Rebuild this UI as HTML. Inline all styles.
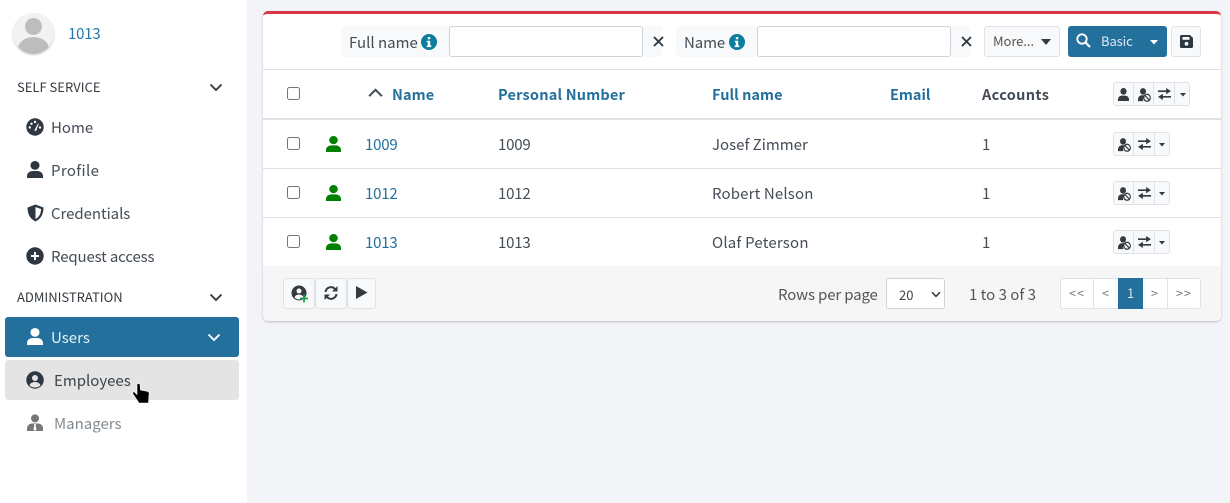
<!DOCTYPE html>
<html><head><meta charset="utf-8">
<style>
*{box-sizing:border-box}
html,body{margin:0;padding:0}
body{width:1230px;height:503px;overflow:hidden;background:#f3f4f8;position:relative;font-family:"Noto Sans CJK SC","Liberation Sans",sans-serif;font-size:15px;color:#444c56;letter-spacing:.1px}
.a{position:absolute;white-space:nowrap;line-height:20px}
.b{position:absolute}
.l{color:#23709d}
.h{font-weight:700;letter-spacing:.2px;font-size:14.5px}
.nav{font-size:15px;letter-spacing:0;color:#444c56}
.cat{font-size:13px;letter-spacing:0;color:#343a40}
.btn{position:absolute;background:#f8f9fa;border:1px solid #dee2e6;border-radius:3px}
.cb{position:absolute;width:13px;height:13px;border:1px solid #767676;border-radius:2.5px;background:#fff;left:287px}
svg{position:absolute;display:block}
</style></head><body>
<svg width="0" height="0" style="position:absolute"><defs>
<symbol id="u" viewBox="1 0.4 14 15.6" preserveAspectRatio="none"><circle cx="8" cy="4.400" r="4"/><path d="M1 16v-1.600C1 11.300 3.400 9.600 6 9.600h4c2.600 0 5 1.700 5 4.800V16z"/></symbol>
<symbol id="ub" viewBox="0 0 15.500 15.500" preserveAspectRatio="none"><circle cx="6" cy="3.800" r="3.600"/><path d="M0 14.500v-1.500C0 10 2 8 4.500 8h3l1 .5A5 5 0 0 0 6.300 14.500z"/><circle cx="10.800" cy="10.800" r="3.900" fill="#f8f9fa" stroke-width="1.400" stroke="currentColor"/><path d="M8.100 8.100l5.400 5.400" stroke="currentColor" stroke-width="1.400"/></symbol>
<symbol id="sw" viewBox="0 0 16 16" preserveAspectRatio="none"><path d="M0 4.200h11M3 11.800h13" stroke="currentColor" stroke-width="2.200" fill="none"/><path d="M10 0l6 4.200-6 4.200zM6 7.600L0 11.800l6 4.200z"/></symbol>
<symbol id="ch" viewBox="0 0 14 9" preserveAspectRatio="none"><path d="M1.500 1.500L7 7l5.500-5.500" fill="none" stroke="currentColor" stroke-width="1.900"/></symbol>
<symbol id="info" viewBox="0 0 16 16"><circle cx="8" cy="8" r="8" fill="#0c7d9d"/><rect x="6.800" y="3" width="2.400" height="2.300" fill="#fff"/><path d="M5.800 6.700h3.400v4.700h1.100v1.700H5.700v-1.700h1.100V8.400h-1z" fill="#fff"/></symbol>
</defs></svg>

<!-- sidebar -->
<div class="b" style="left:0;top:0;width:247px;height:503px;background:#fff"></div>
<div class="b" style="left:13px;top:13px;width:41px;height:41px;border-radius:50%;background:#f1f2f2;box-shadow:0 1px 2px #ccc;overflow:hidden">
<div class="b" style="left:12px;top:5px;width:17px;height:17px;border-radius:50%;background:#bdbdbd"></div>
<div class="b" style="left:5px;top:24px;width:31px;height:24px;border-radius:50%;background:#bdbdbd"></div></div>
<div class="a" style="left:68px;top:24px;font-size:15px;letter-spacing:-.2px;color:#2577ab">1013</div>

<div class="a cat" style="left:17px;top:77px">SELF SERVICE</div>
<svg style="left:209px;top:83px;color:#343a40" width="14" height="9"><use href="#ch"/></svg>

<svg style="left:26px;top:118px" width="18" height="18" viewBox="0 0 18 18"><circle cx="9" cy="9" r="8.700" fill="#2f3742"/><circle cx="5.500" cy="5.800" r="1.200" fill="#fff"/><circle cx="9" cy="4" r="1.200" fill="#fff"/><circle cx="3.800" cy="9.500" r="1.200" fill="#fff"/><circle cx="14" cy="9.500" r="1.200" fill="#fff"/><path d="M8.300 12.500L12 5.500l.8.4-2.800 7.200z" fill="#fff"/></svg>
<div class="a nav" style="left:51px;top:118px">Home</div>
<svg style="left:27px;top:161px;fill:#2f3742" width="16" height="17"><use href="#u"/></svg>
<div class="a nav" style="left:51px;top:161px;letter-spacing:.35px">Profile</div>
<svg style="left:27px;top:204px" width="17" height="18" viewBox="0 0 17 18"><path d="M8.500 0.500L16.500 3.500c0 6-2 11-8 14-6-3-8-8-8-14z" fill="#2f3742"/><path d="M8.500 3L14 5c0 4-1.500 8-5.500 10z" fill="#fff"/></svg>
<div class="a nav" style="left:51px;top:204px;letter-spacing:-.05px">Credentials</div>
<svg style="left:26px;top:247px" width="18" height="18" viewBox="0 0 18 18"><circle cx="9" cy="9" r="8.700" fill="#2f3742"/><path d="M9 5v8M5 9h8" stroke="#fff" stroke-width="2"/></svg>
<div class="a nav" style="left:51px;top:247px;letter-spacing:-.15px">Request access</div>

<div class="a cat" style="left:17px;top:287px">ADMINISTRATION</div>
<svg style="left:209px;top:293px;color:#343a40" width="14" height="9"><use href="#ch"/></svg>

<div class="b" style="left:5px;top:317px;width:234px;height:40px;background:#23709d;border-radius:3px"></div>
<svg style="left:27px;top:328px;fill:#fff" width="16" height="17"><use href="#u"/></svg>
<div class="a nav" style="left:51px;top:328px;color:#e6f0f6">Users</div>
<svg style="left:207px;top:333px;color:#fff" width="14" height="9"><use href="#ch"/></svg>

<div class="b" style="left:5px;top:360px;width:234px;height:40px;background:#e4e4e4;border-radius:3px"></div>
<svg style="left:26px;top:371px" width="18" height="18" viewBox="0 0 18 18"><circle cx="9" cy="9" r="8.700" fill="#2f3742"/><circle cx="9" cy="7" r="3" fill="#e4e4e4"/><path d="M3.500 14.500c.8-2.500 2.800-3.500 5.500-3.500s4.700 1 5.500 3.500A8 8 0 0 1 9 16.500a8 8 0 0 1-5.500-2z" fill="#e4e4e4"/></svg>
<div class="a nav" style="left:54px;top:371px;color:#3c434c">Employees</div>
<svg style="left:132px;top:383px" width="18" height="21" viewBox="0 0 18 21"><path d="M5 1.500C5 .3 8 .3 8 1.500L8.500 7l7.500 1.500c1 .5 1.500 1.500 1 3.500l-.5 8H7L1 11c-1-1.500.5-2.500 1.500-2L5 11.500z" fill="#000" stroke="#fff" stroke-width=".6"/></svg>

<svg style="left:27px;top:414px" width="16" height="18" viewBox="0 0 16 18"><circle cx="8" cy="4.400" r="4" fill="#777"/><path d="M0 17v-2.500C0 11.500 2.500 9.500 5 9.500h6c2.500 0 5 2 5 5V17z" fill="#777"/><path d="M7 10h2l-.3 1.500.8 4-1.500 1.500-1.500-1.500.8-4z" fill="#fff"/></svg>
<div class="a nav" style="left:54px;top:414px;color:#848b92">Managers</div>

<!-- card -->
<div class="b" style="left:263px;top:11px;width:958px;height:310px;background:#fff;border-top:3px solid #dc3545;border-radius:5px;box-shadow:0 1px 2px rgba(0,0,0,.22);overflow:hidden">
<div class="b" style="left:0;top:252px;width:958px;height:55px;background:#f6f6f7"></div>
</div>

<!-- filter bar -->
<div class="b" style="left:341px;top:26px;width:321px;height:31px;background:#f8f9fa;border-radius:3px"></div>
<div class="a" style="left:349px;top:33px;letter-spacing:0">Full name</div>
<svg style="left:421px;top:34px" width="16" height="16"><use href="#info"/></svg>
<div class="b" style="left:449px;top:26px;width:194px;height:31px;background:#fff;border:1px solid #ced4da;border-radius:3px"></div>
<svg style="left:653px;top:36px" width="11" height="11" viewBox="0 0 11 11"><path d="M1 1l9 9M10 1l-9 9" stroke="#2f3742" stroke-width="1.900"/></svg>

<div class="b" style="left:676px;top:26px;width:294px;height:31px;background:#f8f9fa;border-radius:3px"></div>
<div class="a" style="left:684px;top:33px;letter-spacing:-.1px">Name</div>
<svg style="left:729px;top:34px" width="16" height="16"><use href="#info"/></svg>
<div class="b" style="left:757px;top:26px;width:194px;height:31px;background:#fff;border:1px solid #ced4da;border-radius:3px"></div>
<svg style="left:961px;top:36px" width="11" height="11" viewBox="0 0 11 11"><path d="M1 1l9 9M10 1l-9 9" stroke="#2f3742" stroke-width="1.900"/></svg>

<div class="btn" style="left:984px;top:26px;width:76px;height:31px"></div>
<div class="a" style="left:993px;top:31px;font-size:13px;letter-spacing:-.05px;color:#555">More...</div>
<svg style="left:1041px;top:39px" width="11" height="6"><path d="M0 0h10L5 6z" fill="#343a40"/></svg>

<div class="b" style="left:1068px;top:26px;width:99px;height:31px;background:#23709d;border-radius:3px"></div>
<svg style="left:1076px;top:33px" width="15" height="15" viewBox="0 0 15 15"><circle cx="6" cy="6" r="4.700" fill="none" stroke="#fff" stroke-width="1.800"/><path d="M9.500 9.500l4.500 4.500" stroke="#fff" stroke-width="2.200"/></svg>
<div class="a" style="left:1101px;top:31px;font-size:13px;letter-spacing:-.1px;color:#dde9f1">Basic</div>
<svg style="left:1150px;top:40px" width="9" height="5"><path d="M0 0h8L4 4.500z" fill="#fff"/></svg>

<div class="btn" style="left:1171px;top:26px;width:30px;height:31px"></div>
<svg style="left:1180px;top:35px" width="13" height="13" viewBox="0 0 13 13"><path d="M1.500 0H10l3 3v8.500a1.500 1.500 0 0 1-1.500 1.500h-10A1.500 1.500 0 0 1 0 11.500v-10A1.500 1.500 0 0 1 1.500 0z" fill="#2f3742"/><rect x="2.500" y="2" width="7" height="2.800" fill="#f8f9fa"/><circle cx="6.500" cy="8.800" r="1.900" fill="#f8f9fa"/></svg>

<!-- lines -->
<div class="b" style="left:263px;top:69px;width:958px;height:1px;background:#dee2e6"></div>
<div class="b" style="left:263px;top:118px;width:958px;height:2px;background:#dee2e6"></div>
<div class="b" style="left:263px;top:168px;width:958px;height:1px;background:#dee2e6"></div>
<div class="b" style="left:263px;top:217px;width:958px;height:1px;background:#dee2e6"></div>

<!-- header -->
<div class="cb" style="top:87px"></div>
<svg style="left:368px;top:88px;color:#444c56" width="15" height="10" viewBox="0 0 14 9"><path d="M1 7.500L7 1.500l6 6" fill="none" stroke="currentColor" stroke-width="1.900"/></svg>
<div class="a h l" style="left:392px;top:85px;letter-spacing:.1px">Name</div>
<div class="a h l" style="left:498px;top:85px">Personal Number</div>
<div class="a h l" style="left:712px;top:85px;letter-spacing:.05px">Full name</div>
<div class="a h l" style="left:890px;top:85px;letter-spacing:0">Email</div>
<div class="a h" style="left:982px;top:85px;color:#444c56;letter-spacing:.35px">Accounts</div>

<div class="btn" style="left:1113px;top:82px;width:77px;height:24px"></div>
<div class="b" style="left:1133px;top:83px;width:1px;height:22px;background:#dee2e6"></div>
<div class="b" style="left:1153px;top:83px;width:1px;height:22px;background:#dee2e6"></div>
<div class="b" style="left:1174px;top:83px;width:1px;height:22px;background:#dee2e6"></div>
<svg style="left:1118px;top:88px;fill:#343a40" width="11" height="13"><use href="#u"/></svg>
<svg style="left:1138px;top:88px;fill:#343a40;color:#343a40" width="13" height="14"><use href="#ub"/></svg>
<svg style="left:1158px;top:88px;fill:#343a40;color:#343a40" width="13" height="12"><use href="#sw"/></svg>
<svg style="left:1180px;top:93px" width="6" height="4"><path d="M0 0h6L3 3.500z" fill="#343a40"/></svg>

<!-- rows -->
<div class="cb" style="top:137px"></div>
<svg style="left:326px;top:136px;fill:#008000" width="15" height="16"><use href="#u"/></svg>
<div class="a l" style="left:365px;top:135px;letter-spacing:-.2px">1009</div>
<div class="a" style="left:498px;top:135px;letter-spacing:-.2px">1009</div>
<div class="a" style="left:712px;top:135px;letter-spacing:0">Josef Zimmer</div>
<div class="a" style="left:982px;top:135px">1</div>

<div class="cb" style="top:186px"></div>
<svg style="left:326px;top:185px;fill:#008000" width="15" height="16"><use href="#u"/></svg>
<div class="a l" style="left:365px;top:184px;letter-spacing:-.2px">1012</div>
<div class="a" style="left:498px;top:184px;letter-spacing:-.2px">1012</div>
<div class="a" style="left:712px;top:184px;letter-spacing:.15px">Robert Nelson</div>
<div class="a" style="left:982px;top:184px">1</div>

<div class="cb" style="top:235px"></div>
<svg style="left:326px;top:234px;fill:#008000" width="15" height="16"><use href="#u"/></svg>
<div class="a l" style="left:365px;top:233px;letter-spacing:-.2px">1013</div>
<div class="a" style="left:498px;top:233px;letter-spacing:-.2px">1013</div>
<div class="a" style="left:712px;top:233px;letter-spacing:.2px">Olaf Peterson</div>
<div class="a" style="left:982px;top:233px">1</div>

<!-- row actions -->
<div class="btn" style="left:1113px;top:132px;width:57px;height:24px"></div>
<div class="b" style="left:1133px;top:133px;width:1px;height:22px;background:#dee2e6"></div>
<div class="b" style="left:1154px;top:133px;width:1px;height:22px;background:#dee2e6"></div>
<svg style="left:1118px;top:138px;fill:#343a40;color:#343a40" width="13" height="14"><use href="#ub"/></svg>
<svg style="left:1138px;top:138px;fill:#343a40;color:#343a40" width="13" height="12"><use href="#sw"/></svg>
<svg style="left:1159px;top:143px" width="6" height="4"><path d="M0 0h6L3 3.500z" fill="#343a40"/></svg>

<div class="btn" style="left:1113px;top:181px;width:57px;height:24px"></div>
<div class="b" style="left:1133px;top:182px;width:1px;height:22px;background:#dee2e6"></div>
<div class="b" style="left:1154px;top:182px;width:1px;height:22px;background:#dee2e6"></div>
<svg style="left:1118px;top:187px;fill:#343a40;color:#343a40" width="13" height="14"><use href="#ub"/></svg>
<svg style="left:1138px;top:187px;fill:#343a40;color:#343a40" width="13" height="12"><use href="#sw"/></svg>
<svg style="left:1159px;top:192px" width="6" height="4"><path d="M0 0h6L3 3.500z" fill="#343a40"/></svg>

<div class="btn" style="left:1113px;top:230px;width:57px;height:24px"></div>
<div class="b" style="left:1133px;top:231px;width:1px;height:22px;background:#dee2e6"></div>
<div class="b" style="left:1154px;top:231px;width:1px;height:22px;background:#dee2e6"></div>
<svg style="left:1118px;top:236px;fill:#343a40;color:#343a40" width="13" height="14"><use href="#ub"/></svg>
<svg style="left:1138px;top:236px;fill:#343a40;color:#343a40" width="13" height="12"><use href="#sw"/></svg>
<svg style="left:1159px;top:241px" width="6" height="4"><path d="M0 0h6L3 3.500z" fill="#343a40"/></svg>

<!-- footer -->
<div class="btn" style="left:283px;top:278px;width:32px;height:31px"></div>
<svg style="left:291px;top:285px" width="18" height="19" viewBox="0 0 18 19"><circle cx="8" cy="8" r="7.500" fill="#343a40"/><circle cx="8" cy="6" r="2.500" fill="#f8f9fa"/><path d="M3.500 12.500c.8-2 2.400-3 4.500-3s3.700 1 4.500 3A7 7 0 0 1 8 14.500a7 7 0 0 1-4.500-2z" fill="#f8f9fa"/><path d="M13 9.500v8M9 13.500h8" stroke="#1f9d4d" stroke-width="1.700"/></svg>
<div class="btn" style="left:315px;top:278px;width:32px;height:31px"></div>
<svg style="left:324px;top:286px" width="14" height="14" viewBox="0 0 14 14"><path d="M1.500 6A5.500 5.500 0 0 1 11 3M12.500 8A5.500 5.500 0 0 1 3 11" fill="none" stroke="#343a40" stroke-width="2"/><path d="M13.500 0v5.500H8zM.5 14V8.500H6z" fill="#343a40"/></svg>
<div class="btn" style="left:347px;top:278px;width:29px;height:31px"></div>
<svg style="left:356px;top:286px" width="12" height="14"><path d="M0 0l11.500 6.500L0 13z" fill="#343a40"/></svg>

<div class="a" style="left:778px;top:285px;letter-spacing:-.15px;color:#555">Rows per page</div>
<div class="b" style="left:886px;top:278px;width:59px;height:31px;background:#fff;border:1px solid #ced4da;border-radius:3px"></div>
<div class="a" style="left:899px;top:285px;font-size:13px;letter-spacing:0;color:#444">20</div>
<svg style="left:931px;top:291px;color:#333" width="10" height="7"><use href="#ch"/></svg>
<div class="a" style="left:969px;top:285px;letter-spacing:0;color:#555">1 to 3 of 3</div>

<div class="b" style="left:1060px;top:278px;width:141px;height:31px;background:#fff;border:1px solid #dee2e6;border-radius:3px"></div>
<div class="b" style="left:1093px;top:279px;width:1px;height:29px;background:#dee2e6"></div>
<div class="b" style="left:1118px;top:278px;width:25px;height:31px;background:#23709d"></div>
<div class="b" style="left:1167px;top:279px;width:1px;height:29px;background:#dee2e6"></div>
<div class="a" style="left:1069px;top:283px;font-size:12.500px;letter-spacing:1px;color:#777">&lt;&lt;</div>
<div class="a" style="left:1102px;top:283px;font-size:12.500px;color:#777">&lt;</div>
<div class="a" style="left:1127px;top:283px;font-size:13px;letter-spacing:0;color:#d7e6ef">1</div>
<div class="a" style="left:1151px;top:283px;font-size:12.500px;color:#777">&gt;</div>
<div class="a" style="left:1176px;top:283px;font-size:12.500px;letter-spacing:1px;color:#777">&gt;&gt;</div>
</body></html>
